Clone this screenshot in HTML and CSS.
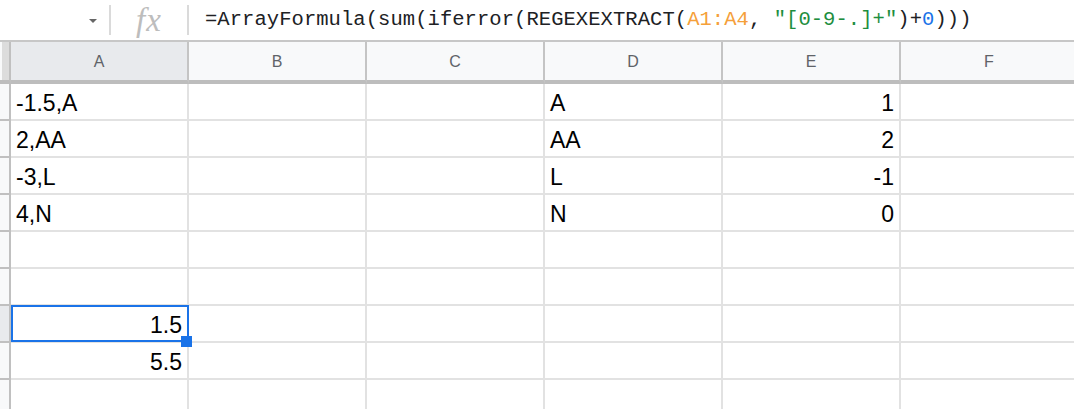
FILE: index.html
```html
<!DOCTYPE html>
<html>
<head>
<meta charset="utf-8">
<link rel="stylesheet" href="styles.css">
</head>
<body>
<div class="app">
  <div class="fbar">
    <div class="namebox"><span class="caret"></span></div>
    <div class="sep"></div>
    <div class="fx">fx</div>
    <div class="sep"></div>
    <div class="formula">=ArrayFormula(sum(iferror(REGEXEXTRACT(<span class="ref">A1:A4</span>, <span class="str">"[0-9-.]+"</span>)+<span class="num">0</span>)))</div>
  </div>
  <div class="grid">
    <div class="row head">
      <div class="stub corner"></div>
      <div class="hc sel">A</div>
      <div class="hc">B</div>
      <div class="hc">C</div>
      <div class="hc">D</div>
      <div class="hc">E</div>
      <div class="hc">F</div>
    </div>
    <div class="row">
      <div class="stub"></div>
      <div class="c">-1.5,A</div><div class="c"></div><div class="c"></div>
      <div class="c">A</div><div class="c r">1</div><div class="c"></div>
    </div>
    <div class="row">
      <div class="stub"></div>
      <div class="c">2,AA</div><div class="c"></div><div class="c"></div>
      <div class="c">AA</div><div class="c r">2</div><div class="c"></div>
    </div>
    <div class="row">
      <div class="stub"></div>
      <div class="c">-3,L</div><div class="c"></div><div class="c"></div>
      <div class="c">L</div><div class="c r">-1</div><div class="c"></div>
    </div>
    <div class="row">
      <div class="stub"></div>
      <div class="c">4,N</div><div class="c"></div><div class="c"></div>
      <div class="c">N</div><div class="c r">0</div><div class="c"></div>
    </div>
    <div class="row">
      <div class="stub"></div>
      <div class="c"></div><div class="c"></div><div class="c"></div>
      <div class="c"></div><div class="c"></div><div class="c"></div>
    </div>
    <div class="row">
      <div class="stub"></div>
      <div class="c"></div><div class="c"></div><div class="c"></div>
      <div class="c"></div><div class="c"></div><div class="c"></div>
    </div>
    <div class="row">
      <div class="stub active"></div>
      <div class="c r selcell">1.5<span class="selbox"></span><span class="handle"></span></div><div class="c"></div><div class="c"></div>
      <div class="c"></div><div class="c"></div><div class="c"></div>
    </div>
    <div class="row">
      <div class="stub"></div>
      <div class="c r">5.5</div><div class="c"></div><div class="c"></div>
      <div class="c"></div><div class="c"></div><div class="c"></div>
    </div>
    <div class="row">
      <div class="stub"></div>
      <div class="c"></div><div class="c"></div><div class="c"></div>
      <div class="c"></div><div class="c"></div><div class="c"></div>
    </div>
  </div>
</div>
</body>
</html>
```

FILE: styles.css
```css
* { box-sizing: border-box; }
html, body { margin: 0; padding: 0; background: #fff; }
body { width: 1074px; height: 409px; overflow: hidden; }
.app { width: 1074px; height: 409px; overflow: hidden; }

.fbar {
  height: 42px;
  border-bottom: 2px solid #c7c7c7;
  display: flex;
  align-items: center;
}
.namebox {
  width: 109px;
  height: 40px;
  display: flex;
  align-items: center;
  justify-content: flex-end;
  padding-right: 12px;
}
.caret {
  width: 0; height: 0;
  border-left: 4px solid transparent;
  border-right: 4px solid transparent;
  border-top: 4px solid #666;
  margin-top: 2px;
}
.sep {
  width: 2px;
  height: 30px;
  background: #dadada;
}
.fx {
  width: 76px;
  font-family: "Liberation Serif", serif;
  font-style: italic;
  font-size: 33px;
  color: #bdbdbd;
  text-align: center;
  line-height: 40px;
  letter-spacing: 1px;
}
.formula {
  padding-left: 16px;
  font-family: "Liberation Mono", monospace;
  font-size: 20.5px;
  letter-spacing: 0.06px;
  color: #202124;
  white-space: nowrap;
  line-height: 40px;
}
.ref { color: #f5a03a; }
.str { color: #1e8e3e; }
.num { color: #1a73e8; }

.grid { width: 1079px; }
.row {
  display: grid;
  grid-template-columns: 11px repeat(6, 178px);
  height: 37px;
}
.row.head { height: 42px; }
.stub {
  background: #f8f9fa;
  border-right: 2px solid #c0c0c0;
  border-bottom: 2px solid #c0c0c0;
}
.stub.active { background: #e8eaed; }
.corner {
  background: linear-gradient(to right, #f8f9fa 0 2px, #dcdcdc 2px 100%);
  border-bottom: 4px solid #bdbdbd;
}
.hc {
  background: #f8f9fa;
  border-right: 2px solid #c4c4c4;
  border-bottom: 4px solid #bdbdbd;
  font-family: "Liberation Sans", Arial, sans-serif;
  font-size: 16px;
  color: #5f6368;
  display: flex;
  align-items: center;
  justify-content: center;
  padding-top: 2px;
}
.hc.sel { background: #e8eaed; }
.c {
  border-right: 2px solid #e2e2e2;
  border-bottom: 2px solid #e2e2e2;
  font-family: "Liberation Sans", Arial, sans-serif;
  font-size: 23px;
  color: #000;
  padding: 0 5px 4px 5px;
  display: flex;
  align-items: flex-end;
  white-space: nowrap;
  line-height: 1;
}
.c.r { justify-content: flex-end; }
.selcell { position: relative; }
.selbox {
  position: absolute;
  left: 0; top: -1px; right: -2px; bottom: -1px;
  border: 2px solid #1a73e8;
  pointer-events: none;
}
.handle {
  position: absolute;
  width: 11px; height: 11px;
  right: -5px; bottom: -6px;
  background: #1a73e8;
}
```
